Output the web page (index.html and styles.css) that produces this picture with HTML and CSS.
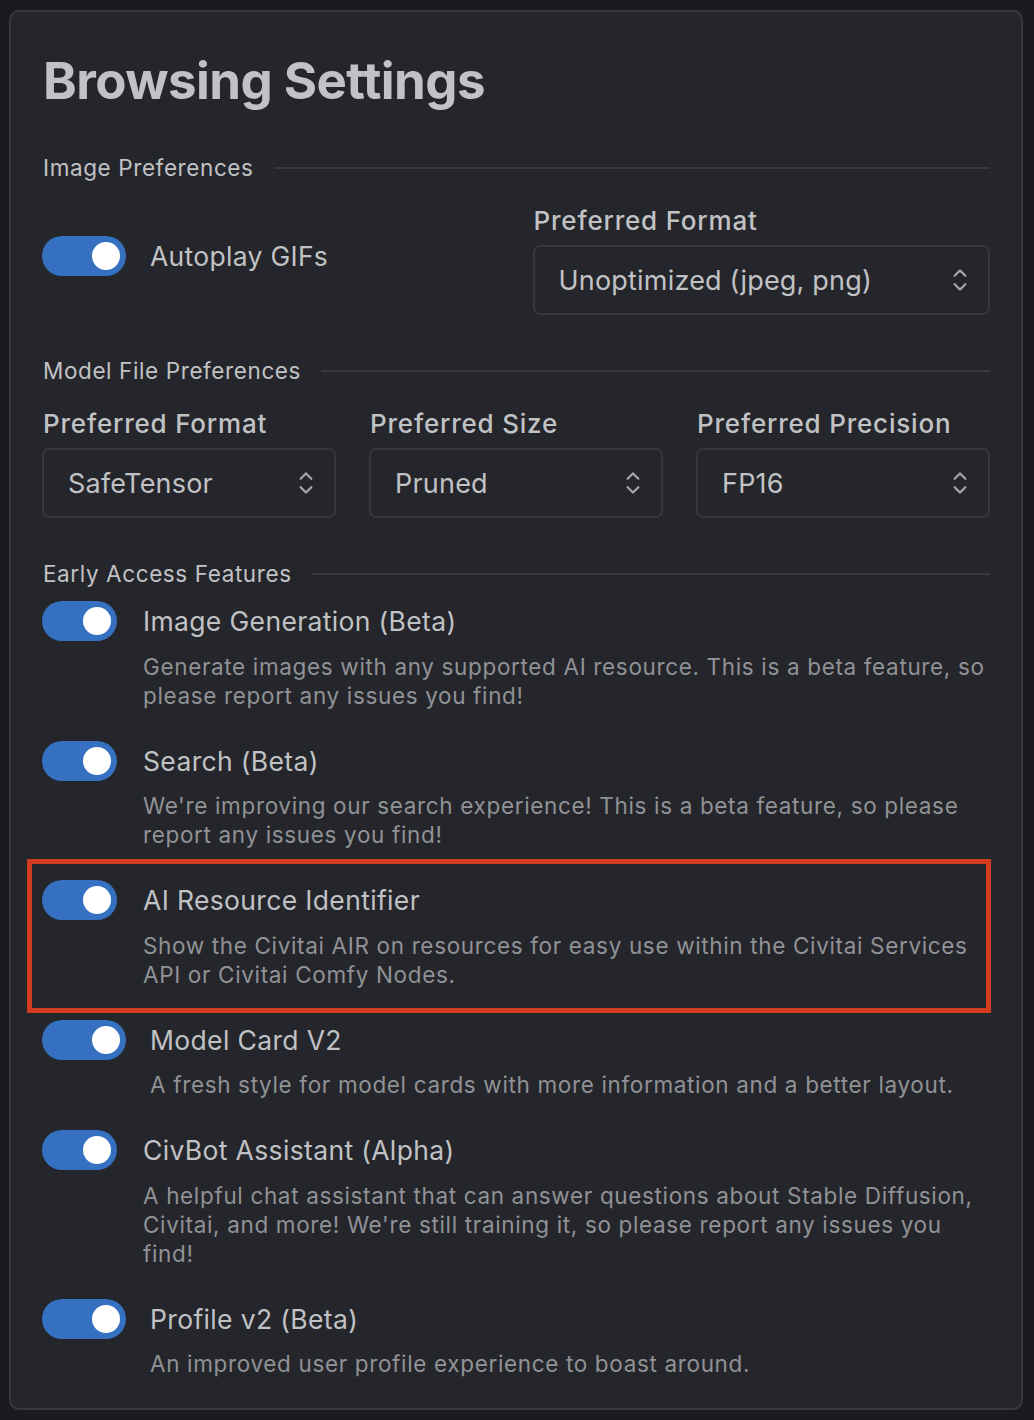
FILE: index.html
```html
<!DOCTYPE html>
<html lang="en">
<head>
<meta charset="utf-8">
<title>Browsing Settings</title>
<link rel="stylesheet" href="styles.css">
</head>
<body>
<div class="card">
  <h1 class="title">Browsing Settings</h1>

  <div class="divider divider-first"><span class="divider-label">Image Preferences</span><span class="divider-line"></span></div>
  <div class="grid grid-2">
    <div class="cell cell-toggle">
      <div class="switch-row">
        <span class="switch switch-wide"><span class="thumb"></span></span>
        <span class="switch-label switch-label-wide">Autoplay GIFs</span>
      </div>
    </div>
    <div class="cell">
      <div class="field-label">Preferred Format</div>
      <div class="select"><span class="select-value">Unoptimized (jpeg, png)</span><svg class="chev" viewBox="0 0 15 15"><path d="M4.93179 5.43179C4.75605 5.60753 4.75605 5.89245 4.93179 6.06819C5.10753 6.24392 5.39245 6.24392 5.56819 6.06819L7.49999 4.13638L9.43179 6.06819C9.60753 6.24392 9.89245 6.24392 10.0682 6.06819C10.2439 5.89245 10.2439 5.60753 10.0682 5.43179L7.81819 3.18179C7.73379 3.0974 7.61934 3.04999 7.49999 3.04999C7.38064 3.04999 7.26618 3.0974 7.18179 3.18179L4.93179 5.43179ZM10.0682 9.56819C10.2439 9.39245 10.2439 9.10753 10.0682 8.93179C9.89245 8.75606 9.60753 8.75606 9.43179 8.93179L7.49999 10.8636L5.56819 8.93179C5.39245 8.75606 5.10753 8.75606 4.93179 8.93179C4.75605 9.10753 4.75605 9.39245 4.93179 9.56819L7.18179 11.8182C7.26618 11.9026 7.38064 11.95 7.49999 11.95C7.61934 11.95 7.73379 11.9026 7.81819 11.8182L10.0682 9.56819Z"/></svg></div>
    </div>
  </div>

  <div class="divider"><span class="divider-label">Model File Preferences</span><span class="divider-line"></span></div>
  <div class="grid grid-3">
    <div class="cell">
      <div class="field-label">Preferred Format</div>
      <div class="select"><span class="select-value">SafeTensor</span><svg class="chev" viewBox="0 0 15 15"><path d="M4.93179 5.43179C4.75605 5.60753 4.75605 5.89245 4.93179 6.06819C5.10753 6.24392 5.39245 6.24392 5.56819 6.06819L7.49999 4.13638L9.43179 6.06819C9.60753 6.24392 9.89245 6.24392 10.0682 6.06819C10.2439 5.89245 10.2439 5.60753 10.0682 5.43179L7.81819 3.18179C7.73379 3.0974 7.61934 3.04999 7.49999 3.04999C7.38064 3.04999 7.26618 3.0974 7.18179 3.18179L4.93179 5.43179ZM10.0682 9.56819C10.2439 9.39245 10.2439 9.10753 10.0682 8.93179C9.89245 8.75606 9.60753 8.75606 9.43179 8.93179L7.49999 10.8636L5.56819 8.93179C5.39245 8.75606 5.10753 8.75606 4.93179 8.93179C4.75605 9.10753 4.75605 9.39245 4.93179 9.56819L7.18179 11.8182C7.26618 11.9026 7.38064 11.95 7.49999 11.95C7.61934 11.95 7.73379 11.9026 7.81819 11.8182L10.0682 9.56819Z"/></svg></div>
    </div>
    <div class="cell">
      <div class="field-label">Preferred Size</div>
      <div class="select"><span class="select-value">Pruned</span><svg class="chev" viewBox="0 0 15 15"><path d="M4.93179 5.43179C4.75605 5.60753 4.75605 5.89245 4.93179 6.06819C5.10753 6.24392 5.39245 6.24392 5.56819 6.06819L7.49999 4.13638L9.43179 6.06819C9.60753 6.24392 9.89245 6.24392 10.0682 6.06819C10.2439 5.89245 10.2439 5.60753 10.0682 5.43179L7.81819 3.18179C7.73379 3.0974 7.61934 3.04999 7.49999 3.04999C7.38064 3.04999 7.26618 3.0974 7.18179 3.18179L4.93179 5.43179ZM10.0682 9.56819C10.2439 9.39245 10.2439 9.10753 10.0682 8.93179C9.89245 8.75606 9.60753 8.75606 9.43179 8.93179L7.49999 10.8636L5.56819 8.93179C5.39245 8.75606 5.10753 8.75606 4.93179 8.93179C4.75605 9.10753 4.75605 9.39245 4.93179 9.56819L7.18179 11.8182C7.26618 11.9026 7.38064 11.95 7.49999 11.95C7.61934 11.95 7.73379 11.9026 7.81819 11.8182L10.0682 9.56819Z"/></svg></div>
    </div>
    <div class="cell">
      <div class="field-label">Preferred Precision</div>
      <div class="select"><span class="select-value">FP16</span><svg class="chev" viewBox="0 0 15 15"><path d="M4.93179 5.43179C4.75605 5.60753 4.75605 5.89245 4.93179 6.06819C5.10753 6.24392 5.39245 6.24392 5.56819 6.06819L7.49999 4.13638L9.43179 6.06819C9.60753 6.24392 9.89245 6.24392 10.0682 6.06819C10.2439 5.89245 10.2439 5.60753 10.0682 5.43179L7.81819 3.18179C7.73379 3.0974 7.61934 3.04999 7.49999 3.04999C7.38064 3.04999 7.26618 3.0974 7.18179 3.18179L4.93179 5.43179ZM10.0682 9.56819C10.2439 9.39245 10.2439 9.10753 10.0682 8.93179C9.89245 8.75606 9.60753 8.75606 9.43179 8.93179L7.49999 10.8636L5.56819 8.93179C5.39245 8.75606 5.10753 8.75606 4.93179 8.93179C4.75605 9.10753 4.75605 9.39245 4.93179 9.56819L7.18179 11.8182C7.26618 11.9026 7.38064 11.95 7.49999 11.95C7.61934 11.95 7.73379 11.9026 7.81819 11.8182L10.0682 9.56819Z"/></svg></div>
    </div>
  </div>

  <div class="divider"><span class="divider-label">Early Access Features</span><span class="divider-line"></span></div>
  <div class="features">
    <div class="feature">
      <span class="switch"><span class="thumb"></span></span>
      <div class="feature-text">
        <div class="feature-label">Image Generation (Beta)</div>
        <div class="feature-desc">Generate images with any supported AI resource. This is a beta feature, so please report any issues you find!</div>
      </div>
    </div>
    <div class="feature">
      <span class="switch"><span class="thumb"></span></span>
      <div class="feature-text">
        <div class="feature-label">Search (Beta)</div>
        <div class="feature-desc">We're improving our search experience! This is a beta feature, so please report any issues you find!</div>
      </div>
    </div>
    <div class="feature feature-highlight">
      <span class="switch"><span class="thumb"></span></span>
      <div class="feature-text">
        <div class="feature-label">AI Resource Identifier</div>
        <div class="feature-desc">Show the Civitai AIR on resources for easy use within the Civitai Services API or Civitai Comfy Nodes.</div>
      </div>
      <span class="highlight-box"></span>
    </div>
    <div class="feature feature-wide">
      <span class="switch switch-wide"><span class="thumb"></span></span>
      <div class="feature-text">
        <div class="feature-label">Model Card V2</div>
        <div class="feature-desc">A fresh style for model cards with more information and a better layout.</div>
      </div>
    </div>
    <div class="feature">
      <span class="switch"><span class="thumb"></span></span>
      <div class="feature-text">
        <div class="feature-label">CivBot Assistant (Alpha)</div>
        <div class="feature-desc">A helpful chat assistant that can answer questions about Stable Diffusion, Civitai, and more! We're still training it, so please report any issues you find!</div>
      </div>
    </div>
    <div class="feature feature-wide">
      <span class="switch switch-wide"><span class="thumb"></span></span>
      <div class="feature-text">
        <div class="feature-label">Profile v2 (Beta)</div>
        <div class="feature-desc">An improved user profile experience to boast around.</div>
      </div>
    </div>
  </div>
</div>
</body>
</html>
```

FILE: styles.css
```css
* { box-sizing: border-box; }

html, body {
  margin: 0;
  background: #1a1b1e;
}

body {
  padding: 10px 11px 10px 9px;
  font-family: Inter, "Noto Sans", "Liberation Sans", sans-serif;
  color: #c1c2c5;
}

.card {
  background: #25262b;
  border: 2px solid #38393e;
  border-radius: 10px;
  padding: 38px 31px 30px 31px;
}

.title {
  margin: 0 0 0 1px;
  font-size: 51px;
  line-height: 62px;
  font-weight: 700;
  color: #c1c2c5;
  letter-spacing: -0.55px;
}

.divider {
  display: flex;
  align-items: center;
  gap: 20px;
  height: 28px;
  margin-top: 42px;
}

.divider-first {
  margin-top: 42px;
}

.divider-label {
  font-size: 22.5px;
  line-height: 28px;
  color: #c1c2c5;
  white-space: nowrap;
  letter-spacing: 0.6px;
  padding-left: 1px;
}

.divider-line {
  flex: 1;
  height: 2px;
  background: #38393e;
}

.grid {
  display: grid;
  gap: 33px;
  margin-top: 24px;
}

.grid-2 { grid-template-columns: 1fr 1fr; }
.grid-3 { grid-template-columns: 1fr 1fr 1fr; }

.cell-toggle {
  padding-top: 30px;
}

.field-label {
  font-size: 26px;
  line-height: 30px;
  font-weight: 500;
  color: #c1c2c5;
  letter-spacing: 0.8px;
  padding-left: 1px;
}

.select {
  margin-top: 9px;
  height: 70px;
  border: 2px solid #36373c;
  border-radius: 7px;
  background: #25262b;
  display: flex;
  align-items: center;
  justify-content: space-between;
  padding: 0 10px 0 24px;
}

.select-value {
  font-size: 27px;
  color: #c1c2c5;
  letter-spacing: 0.2px;
}

.chev {
  width: 36px;
  height: 36px;
  fill: #a6a7ab;
}

.switch-row {
  display: flex;
  align-items: center;
}

.switch {
  position: relative;
  flex: none;
  width: 75px;
  height: 40px;
  border-radius: 20px;
  background: #3570c1;
  display: flex;
  align-items: center;
  justify-content: flex-end;
  padding-right: 6px;
}

.switch-wide {
  width: 84px;
}

.thumb {
  width: 28px;
  height: 28px;
  border-radius: 50%;
  background: #ffffff;
}

.switch-label {
  font-size: 26.5px;
  line-height: 40px;
  margin-left: 26px;
  color: #c1c2c5;
  letter-spacing: 0.3px;
}

.switch-label-wide {
  margin-left: 24px;
}

.features {
  margin-top: 13px;
  display: flex;
  flex-direction: column;
  gap: 31px;
}

.feature {
  position: relative;
  display: flex;
  align-items: flex-start;
  gap: 26px;
}

.feature-wide {
  gap: 24px;
}

.feature-text {
  flex: 1;
}

.feature-label {
  font-size: 26.5px;
  line-height: 40px;
  color: #c1c2c5;
  letter-spacing: 0.35px;
}

.feature-desc {
  margin-top: 10.5px;
  font-size: 22.5px;
  line-height: 29px;
  color: #909296;
  letter-spacing: 0.65px;
}

.highlight-box {
  position: absolute;
  top: -21px;
  left: -15px;
  width: 964px;
  height: 154px;
  border: 5px solid #d33b20;
  pointer-events: none;
}
```
